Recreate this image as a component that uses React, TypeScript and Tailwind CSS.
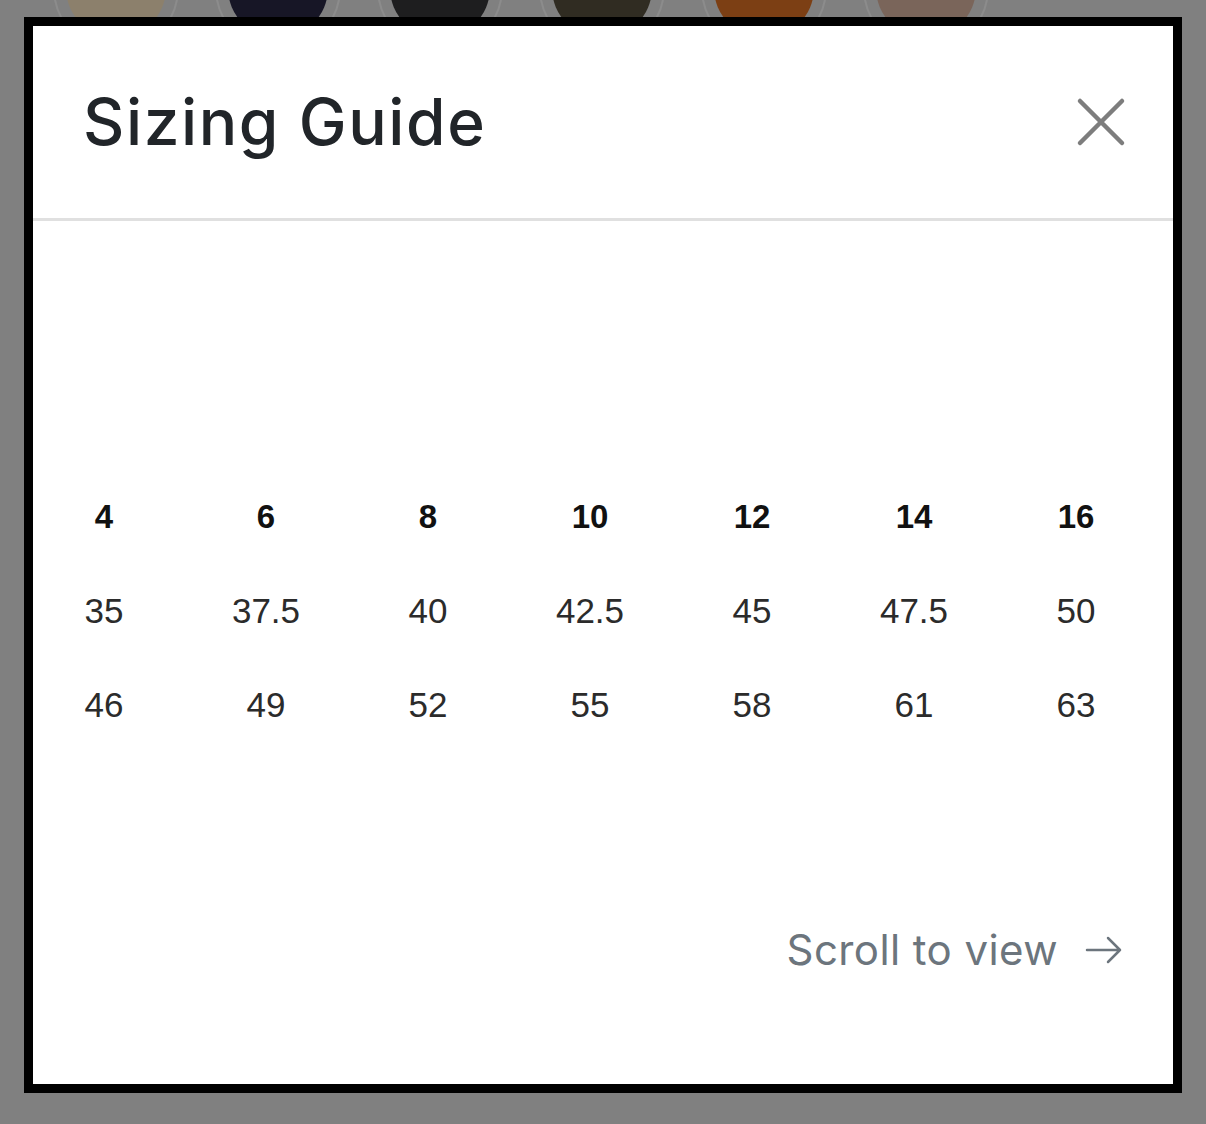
const swatches = ["#8c806c", "#171626", "#1e1e1f", "#302c22", "#7c3f14", "#7a655a"];

const sizes = [
  ["4", "6", "8", "10", "12", "14", "16"],
  ["35", "37.5", "40", "42.5", "45", "47.5", "50"],
  ["46", "49", "52", "55", "58", "61", "63"],
];

function CloseIcon() {
  return (
    <svg width="50" height="50" viewBox="0 0 50 50" fill="none">
      <path d="M4 4L46 46M46 4L4 46" stroke="#7d7d7d" strokeWidth="4.5" strokeLinecap="round" />
    </svg>
  );
}

function ArrowIcon() {
  return (
    <svg width="38" height="30" viewBox="0 0 38 30" fill="none">
      <path
        d="M2 15H35M23 3L35 15L23 27"
        stroke="#6c757d"
        strokeWidth="2.5"
        strokeLinecap="round"
        strokeLinejoin="round"
      />
    </svg>
  );
}

export default function App() {
  return (
    <div className="h-[1124px] w-[1206px] overflow-hidden bg-[#808080]">
      {/* swatches of the page behind the overlay */}
      <div className="h-[17px] overflow-hidden">
        <div className="-mt-[75px] ml-[53px] flex gap-[36px]">
          {swatches.map((c) => (
            <div
              key={c}
              className="flex h-[126px] w-[126px] items-center justify-center rounded-full border-2 border-[#8c8c8c]"
            >
              <div className="h-[100px] w-[100px] rounded-full" style={{ backgroundColor: c }} />
            </div>
          ))}
        </div>
      </div>

      <div className="mx-[24px] h-[1076px] border-[9px] border-black bg-white">
        <div className="flex h-[195px] items-center justify-between border-b-[3px] border-[#e0e0e0] pl-[50px] pr-[47px]">
          <h2 className="font-['Inter',sans-serif] text-[64px] font-medium leading-none tracking-[0.025em] text-[#212529]">
            Sizing Guide
          </h2>
          <button type="button" className="flex items-center justify-center">
            <CloseIcon />
          </button>
        </div>

        <div className="pt-[249px]">
          <div className="pl-[49px] pr-[75px] font-['Liberation_Sans',Arial,sans-serif]">
            {sizes.map((row, i) => (
              <div key={i} className="grid h-[94px] grid-cols-[repeat(7,44px)] items-center justify-between">
                {row.map((v) => (
                  <div key={v} className="flex justify-center">
                    <span
                      className={`whitespace-nowrap ${
                        i === 0
                          ? "text-[33px] font-bold text-[#111]"
                          : "text-[35px] font-normal text-[#2b2b2b]"
                      }`}
                    >
                      {v}
                    </span>
                  </div>
                ))}
              </div>
            ))}
          </div>

          <div className="mt-[170px] flex items-center justify-end gap-[27px] pr-[50px]">
            <span className="font-['Inter',sans-serif] text-[42px] leading-[56px] tracking-[0.01em] text-[#6c757d]">
              Scroll to view
            </span>
            <ArrowIcon />
          </div>
        </div>
      </div>
    </div>
  );
}
